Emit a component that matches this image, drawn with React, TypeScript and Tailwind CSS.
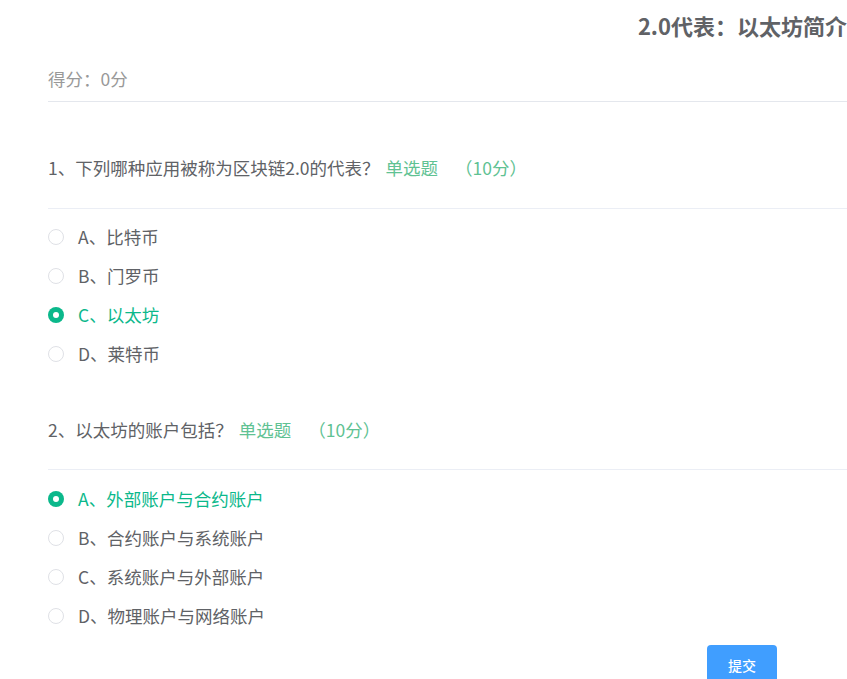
import React from 'react';

const questions = [
  {
    no: 1,
    title: '下列哪种应用被称为区块链2.0的代表？',
    options: ['A、比特币', 'B、门罗币', 'C、以太坊', 'D、莱特币'],
    picked: 2,
  },
  {
    no: 2,
    title: '以太坊的账户包括？',
    options: ['A、外部账户与合约账户', 'B、合约账户与系统账户', 'C、系统账户与外部账户', 'D、物理账户与网络账户'],
    picked: 0,
  },
];

function Radio({ on }: { on: boolean }) {
  return on ? (
    <span className="w-4 h-4 rounded-full bg-[#0bb88b] flex items-center justify-center shrink-0">
      <span className="w-[6px] h-[6px] rounded-full bg-white" />
    </span>
  ) : (
    <span className="w-4 h-4 rounded-full border border-[#dfe1e6] bg-white shrink-0" />
  );
}

export default function App() {
  return (
    <div
      className="w-full h-[679px] overflow-hidden bg-white pl-12"
      style={{ fontFamily: '"Noto Sans CJK SC", "Noto Sans", sans-serif' }}
    >
      <div className="h-[50px] flex items-center justify-end">
        <h1 className="text-[22px] leading-[26px] font-bold text-[#606266] whitespace-nowrap">2.0代表：以太坊简介</h1>
      </div>

      <div className="h-[52px] flex items-end pb-[11px] border-b border-[#e4e7ed]">
        <span className="text-[17.5px] leading-[22px] text-[#999999]">得分：0分</span>
      </div>

      {questions.map((q, qi) => (
        <div key={q.no}>
          <div
            className={`${qi === 0 ? 'pt-[54px] pb-[28px]' : 'pt-[45px] pb-[27px]'} border-b border-[#ebeef5] text-[17.5px] leading-6 text-[#606266] flex items-center whitespace-nowrap`}
          >
            <span>{q.no}、{q.title}</span>
            <span className="ml-[6px] text-[#5fc293]">单选题</span>
            <span className="ml-[17px] text-[#5fc293]">（10分）</span>
          </div>
          <div className={qi === 0 ? 'pt-[8px]' : 'pt-[9px]'}>
            {q.options.map((o, i) => (
              <div key={o} className="h-[39px] flex items-center gap-[14px]">
                <Radio on={i === q.picked} />
                <span className={`text-[17.5px] leading-6 ${i === q.picked ? 'text-[#0bb88b]' : 'text-[#606266]'}`}>{o}</span>
              </div>
            ))}
          </div>
        </div>
      ))}

      <div className="pt-[10px] pl-[659px]">
        <button className="w-[70px] h-[40px] rounded bg-[#409eff] text-white text-sm font-medium">提交</button>
      </div>
    </div>
  );
}
